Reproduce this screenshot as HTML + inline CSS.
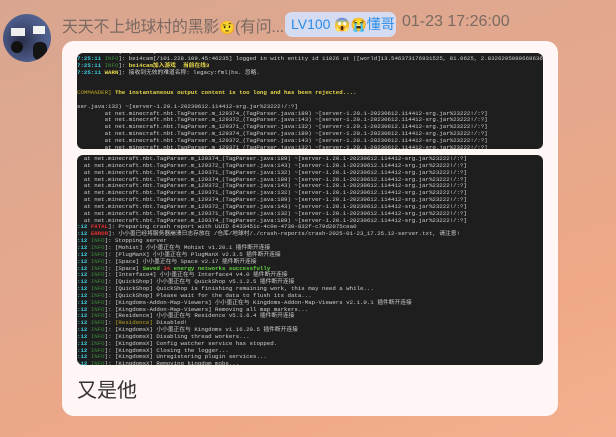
<!DOCTYPE html>
<html><head><meta charset="utf-8"><style>
*{margin:0;padding:0;box-sizing:border-box}
body{width:616px;height:437px;overflow:hidden;position:relative;font-family:"Liberation Sans","Noto Sans CJK SC",sans-serif;
background:linear-gradient(160deg,#d8a690 0%,#e3a88e 40%,#eea886 75%,#f4b08e 100%)}
.av{position:absolute;left:3px;top:14px;width:48px;height:48px;border-radius:50%;background:radial-gradient(circle at 40% 55%,#2a2f4a 0%,#4b5a88 55%,#5d6ea0 100%);overflow:hidden}
.name{position:absolute;left:62px;top:13px;font-size:16px;color:#7a6a62;white-space:nowrap;letter-spacing:-0.3px}
.em{font-size:13px}
.badge{position:absolute;left:285px;top:12px;width:111px;height:25px;border-radius:7px;background:#d5dcf2;color:#2a8ce8;font-size:14px;line-height:25px;padding-left:6px;white-space:nowrap;overflow:hidden}
.time{position:absolute;left:402px;top:13px;font-size:16px;color:#7a6a62}
.bub{position:absolute;left:62px;top:41px;width:496px;height:375px;background:#fff6f5;border-radius:12px}
.term{position:absolute;left:15px;width:466px;background:#1e1e1e;border-radius:6px;overflow:hidden;font-family:"Liberation Mono","Noto Sans CJK SC",monospace;font-size:5.75px;line-height:6.85px;color:#cfcfcf;white-space:pre}
.c{color:#3cc8d8;font-weight:bold}.i{color:#3a8a3a}.y{color:#e8d84a;font-weight:bold}.r{color:#e03030;font-weight:bold}.g{color:#60d040;font-weight:bold}.o{color:#b8a020}
.txt{position:absolute;left:15px;top:333px;font-size:20px;color:#333}
</style></head><body>
<div class="av"><div style="position:absolute;left:8px;top:14px;width:14px;height:8px;background:#eee"></div><div style="position:absolute;left:30px;top:12px;width:12px;height:8px;background:#f2f2f2"></div><div style="position:absolute;left:8px;top:27px;width:12px;height:12px;border-radius:50%;background:#111"></div><div style="position:absolute;left:30px;top:28px;width:14px;height:18px;border-radius:6px;background:#151515"></div></div>
<div class="name">天天不上地球村的黑影<span class="em">🤨</span>(有问...</div>
<div class="badge">LV100 <span class="em">😱😭</span>懂哥</div>
<div class="time">01-23 17:26:00</div>
<div class="bub">
<div class="term" style="top:12px;height:96px;padding-top:0px"><div style="margin-top:-4px"><span class="c">7:25:11</span> <span class="i">INFO</span>]: [Server] ......
<span class="c">7:25:11</span> <span class="i">INFO</span>]: bei4cam[/101.228.109.45:46235] logged in with entity id 11026 at ([world]13.546373176931525, 81.0625, 2.8326205089669636)
<span class="c">7:25:11</span> <span class="i">INFO</span>]: <span class="y">bei4cam加入游戏  当前在线3</span>
<span class="c">7:25:11</span> <span class="y">WARN</span>]: 接收到无效的难道名称: legacy:fml|hs. 忽略.


<span class="o">COMMANDER]</span> <span class="y">The instantaneous output content is too long and has been rejected....</span>

ser.java:132) ~[server-1.20.1-20230612.114412-srg.jar%23222!/:?]
        at net.minecraft.nbt.TagParser.m_129374_(TagParser.java:189) ~[server-1.20.1-20230612.114412-srg.jar%23222!/:?]
        at net.minecraft.nbt.TagParser.m_129372_(TagParser.java:143) ~[server-1.20.1-20230612.114412-srg.jar%23222!/:?]
        at net.minecraft.nbt.TagParser.m_129371_(TagParser.java:132) ~[server-1.20.1-20230612.114412-srg.jar%23222!/:?]
        at net.minecraft.nbt.TagParser.m_129374_(TagParser.java:189) ~[server-1.20.1-20230612.114412-srg.jar%23222!/:?]
        at net.minecraft.nbt.TagParser.m_129372_(TagParser.java:143) ~[server-1.20.1-20230612.114412-srg.jar%23222!/:?]
        at net.minecraft.nbt.TagParser.m_129371_(TagParser.java:132) ~[server-1.20.1-20230612.114412-srg.jar%23222!/:?]
        at net.minecraft.nbt.TagParser.m_129374_(TagParser.java:189) ~[server-1.20.1-20230612.114412-srg.jar%23222!/:?]</div></div>
<div class="term" style="top:114px;height:210px"><div style="margin-top:1px">  at net.minecraft.nbt.TagParser.m_129374_(TagParser.java:189) ~[server-1.20.1-20230612.114412-srg.jar%23222!/:?]
  at net.minecraft.nbt.TagParser.m_129372_(TagParser.java:143) ~[server-1.20.1-20230612.114412-srg.jar%23222!/:?]
  at net.minecraft.nbt.TagParser.m_129371_(TagParser.java:132) ~[server-1.20.1-20230612.114412-srg.jar%23222!/:?]
  at net.minecraft.nbt.TagParser.m_129374_(TagParser.java:189) ~[server-1.20.1-20230612.114412-srg.jar%23222!/:?]
  at net.minecraft.nbt.TagParser.m_129372_(TagParser.java:143) ~[server-1.20.1-20230612.114412-srg.jar%23222!/:?]
  at net.minecraft.nbt.TagParser.m_129371_(TagParser.java:132) ~[server-1.20.1-20230612.114412-srg.jar%23222!/:?]
  at net.minecraft.nbt.TagParser.m_129374_(TagParser.java:189) ~[server-1.20.1-20230612.114412-srg.jar%23222!/:?]
  at net.minecraft.nbt.TagParser.m_129372_(TagParser.java:143) ~[server-1.20.1-20230612.114412-srg.jar%23222!/:?]
  at net.minecraft.nbt.TagParser.m_129371_(TagParser.java:132) ~[server-1.20.1-20230612.114412-srg.jar%23222!/:?]
  at net.minecraft.nbt.TagParser.m_129374_(TagParser.java:189) ~[server-1.20.1-20230612.114412-srg.jar%23222!/:?]
<span class="c">:12</span> <span class="r">FATAL</span>]: Preparing crash report with UUID 6433451c-4c0e-4730-832f-c79d2075cea0
<span class="c">:12</span> <span class="r">ERROR</span>]: 小小墨已经将服务器崩溃日志存放在 /仓库/地球村/./crash-reports/crash-2025-01-23_17.25.12-server.txt, 请注意!
<span class="c">:12</span> <span class="i">INFO</span>]: Stopping server
<span class="c">:12</span> <span class="i">INFO</span>]: [Mohist] 小小墨正在与 Mohist v1.20.1 插件断开连接
<span class="c">:12</span> <span class="i">INFO</span>]: [PlugManX] 小小墨正在与 PlugManX v2.3.5 插件断开连接
<span class="c">:12</span> <span class="i">INFO</span>]: [Space] 小小墨正在与 Space v2.17 插件断开连接
<span class="c">:12</span> <span class="i">INFO</span>]: [Space] <span class="g">Saved <span class="r">34</span> energy networks successfully</span>
<span class="c">:12</span> <span class="i">INFO</span>]: [Interface4] 小小墨正在与 Interface4 v4.0 插件断开连接
<span class="c">:12</span> <span class="i">INFO</span>]: [QuickShop] 小小墨正在与 QuickShop v5.1.2.5 插件断开连接
<span class="c">:12</span> <span class="i">INFO</span>]: [QuickShop] QuickShop is finishing remaining work, this may need a while...
<span class="c">:12</span> <span class="i">INFO</span>]: [QuickShop] Please wait for the data to flush its data...
<span class="c">:12</span> <span class="i">INFO</span>]: [Kingdoms-Addon-Map-Viewers] 小小墨正在与 Kingdoms-Addon-Map-Viewers v2.1.0.1 插件断开连接
<span class="c">:12</span> <span class="i">INFO</span>]: [Kingdoms-Addon-Map-Viewers] Removing all map markers...
<span class="c">:12</span> <span class="i">INFO</span>]: [Residence] 小小墨正在与 Residence v5.1.6.4 插件断开连接
<span class="c">:12</span> <span class="i">INFO</span>]: <span class="o">[Residence]</span> Disabled!
<span class="c">:12</span> <span class="i">INFO</span>]: [KingdomsX] 小小墨正在与 Kingdoms v1.16.20.5 插件断开连接
<span class="c">:12</span> <span class="i">INFO</span>]: [KingdomsX] Disabling thread workers...
<span class="c">:12</span> <span class="i">INFO</span>]: [KingdomsX] Config watcher service has stopped.
<span class="c">:12</span> <span class="i">INFO</span>]: [KingdomsX] Closing the logger...
<span class="c">:12</span> <span class="i">INFO</span>]: [KingdomsX] Unregistering plugin services...
<span class="c">:12</span> <span class="i">INFO</span>]: [KingdomsX] Removing kingdom mobs...</div></div>
<div class="txt">又是他</div>
</div>
</body></html>
